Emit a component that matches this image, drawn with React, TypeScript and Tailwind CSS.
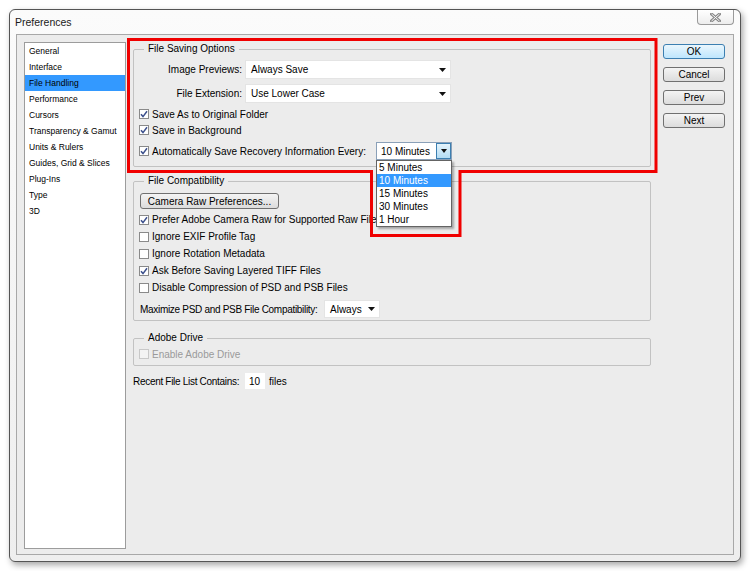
import React from "react";

const categories = [
  "General",
  "Interface",
  "File Handling",
  "Performance",
  "Cursors",
  "Transparency & Gamut",
  "Units & Rulers",
  "Guides, Grid & Slices",
  "Plug-Ins",
  "Type",
  "3D",
];

const intervals = ["5 Minutes", "10 Minutes", "15 Minutes", "30 Minutes", "1 Hour"];

function Check({ checked = false, disabled = false }: { checked?: boolean; disabled?: boolean }) {
  return (
    <span
      className={`w-[10px] h-[10px] shrink-0 border flex items-center justify-center ${
        disabled ? "border-[#c8c8c8] bg-[#f3f3f3]" : "border-[#8a8a8a] bg-white"
      }`}
    >
      {checked && (
        <svg width="8" height="8" viewBox="0 0 8 8">
          <path d="M1 4.2 L3 6.6 L7 1.2" fill="none" stroke="#3b4f8c" strokeWidth="1.5" />
        </svg>
      )}
    </span>
  );
}

function CheckRow({
  label,
  checked,
  disabled,
  h = "h-[16px]",
}: {
  label: string;
  checked?: boolean;
  disabled?: boolean;
  h?: string;
}) {
  return (
    <div className={`flex items-center gap-[3px] ${h}`}>
      <Check checked={checked} disabled={disabled} />
      <span className={`whitespace-nowrap ${disabled ? "text-[#9a9a9a]" : ""}`}>{label}</span>
    </div>
  );
}

function Arrow() {
  return (
    <svg width="7" height="4" viewBox="0 0 7 4" className="shrink-0">
      <path d="M0 0 H7 L3.5 4 Z" fill="#111" />
    </svg>
  );
}

function Select({ value, className }: { value: string; className: string }) {
  return (
    <div className={`shrink-0 bg-white border border-[#e4e4e4] flex items-center pl-[5px] pr-[4px] ${className}`}>
      <span className="flex-1 whitespace-nowrap">{value}</span>
      <Arrow />
    </div>
  );
}

function Button({ label, primary }: { label: string; primary?: boolean }) {
  return (
    <div
      className={`w-[62px] h-[15px] rounded-[3px] border flex items-center justify-center leading-none ${
        primary
          ? "border-[#3c7fb1] bg-gradient-to-b from-[#eaf6fd] to-[#bee6fd]"
          : "border-[#707070] bg-gradient-to-b from-[#f4f4f4] to-[#dcdcdc]"
      }`}
    >
      {label}
    </div>
  );
}

function IntervalDropdown() {
  return (
    <div className="relative z-10 shrink-0 w-[76px] h-[18px] border border-[#8aa0b8] bg-white flex items-stretch">
      <span className="flex-1 pl-[4px] flex items-center whitespace-nowrap">10 Minutes</span>
      <span className="w-[15px] border border-[#3c7fb1] bg-gradient-to-b from-[#e5f4fc] to-[#b3dcf4] flex items-center justify-center">
        <svg width="6" height="4" viewBox="0 0 6 4">
          <path d="M0 0 H6 L3 4 Z" fill="#111" />
        </svg>
      </span>
      <div className="absolute left-[-1px] top-[17px] w-[76px] border border-[#646464] bg-white shadow-[2px_2px_2px_rgba(0,0,0,0.3)]">
        {intervals.map((it) => (
          <div
            key={it}
            className={`h-[13px] leading-[13px] px-[2px] whitespace-nowrap ${
              it === "10 Minutes" ? "bg-[#3399ff] text-white" : ""
            }`}
          >
            {it}
          </div>
        ))}
      </div>
    </div>
  );
}

export default function App() {
  return (
    <div className="relative w-[750px] h-[571px] bg-white font-['Liberation_Sans',Arial,sans-serif] text-[10px] text-black overflow-hidden">
      <div className="pl-[9px] pt-[9px]">
        {/* window */}
        <div className="w-[732px] h-[553px] border border-[#555] rounded-[6px] bg-gradient-to-b from-[#fbfbfb] to-[#eeeeee] shadow-[2px_3px_6px_rgba(0,0,0,0.35)] flex flex-col">
          <div className="h-[24px] flex items-start shrink-0">
            <span className="pl-[5px] pt-[5px] text-[10.5px] text-[#1a1a1a]">Preferences</span>
            <div className="ml-auto mr-[6px] w-[37px] h-[15px] border border-t-0 border-[#9a9a9a] rounded-b-[4px] bg-gradient-to-b from-white to-[#ededed] flex items-center justify-center">
              <svg width="11" height="9" viewBox="0 0 11 9">
                <path d="M1.5 1 L9.5 8 M9.5 1 L1.5 8" stroke="#8a8a8a" strokeWidth="3" strokeLinecap="square" />
                <path d="M1.5 1 L9.5 8 M9.5 1 L1.5 8" stroke="#fafafa" strokeWidth="1" />
              </svg>
            </div>
          </div>

          {/* client area */}
          <div className="mx-[6px] mb-[6px] flex-1 border border-[#a8a8a8] bg-[#ececec] flex items-start pl-[7px] pt-[7px]">
            {/* category list */}
            <div className="w-[102px] h-[507px] border border-[#9c9c9c] bg-white text-[8.5px] shrink-0">
              {categories.map((c) => (
                <div
                  key={c}
                  className={`h-[16px] leading-[16px] pl-[4px] whitespace-nowrap ${
                    c === "File Handling" ? "bg-[#3399ff]" : ""
                  }`}
                >
                  {c}
                </div>
              ))}
            </div>

            {/* main panel */}
            <div className="ml-[7px] mt-[1px] w-[518px] shrink-0 flex flex-col">
              <fieldset className="border border-[#c2c2c2] rounded-[2px] px-[5px] pt-[5px] pb-[6px]">
                <legend className="ml-[5px] px-[4px] leading-[12px]">File Saving Options</legend>
                <div className="flex items-center h-[19px]">
                  <span className="w-[103px] shrink-0 text-right">Image Previews:</span>
                  <Select value="Always Save" className="ml-[3px] w-[206px] h-[19px]" />
                </div>
                <div className="flex items-center h-[19px] mt-[5px]">
                  <span className="w-[103px] shrink-0 text-right">File Extension:</span>
                  <Select value="Use Lower Case" className="ml-[3px] w-[206px] h-[19px]" />
                </div>
                <div className="mt-[3px]">
                  <CheckRow label="Save As to Original Folder" checked />
                  <CheckRow label="Save in Background" checked />
                </div>
                <div className="mt-[4px] flex items-center h-[18px]">
                  <Check checked />
                  <span className="ml-[3px] w-[224px] shrink-0 whitespace-nowrap">
                    Automatically Save Recovery Information Every:
                  </span>
                  <IntervalDropdown />
                </div>
              </fieldset>

              <fieldset className="mt-[8px] border border-[#c2c2c2] rounded-[2px] px-[5px] pt-[6px] pb-[2px]">
                <legend className="ml-[5px] px-[4px] leading-[12px]">File Compatibility</legend>
                <div className="ml-[1px] w-[139px] h-[16px] rounded-[3px] border border-[#707070] bg-gradient-to-b from-[#f4f4f4] to-[#dcdcdc] flex items-center justify-center whitespace-nowrap">
                  Camera Raw Preferences...
                </div>
                <div className="mt-[2px]">
                  <CheckRow label="Prefer Adobe Camera Raw for Supported Raw Files" checked h="h-[17px]" />
                  <CheckRow label="Ignore EXIF Profile Tag" h="h-[17px]" />
                  <CheckRow label="Ignore Rotation Metadata" h="h-[17px]" />
                  <CheckRow label="Ask Before Saving Layered TIFF Files" checked h="h-[17px]" />
                  <CheckRow label="Disable Compression of PSD and PSB Files" h="h-[17px]" />
                </div>
                <div className="mt-[4px] flex items-center h-[18px]">
                  <span className="ml-[1px] w-[184px] shrink-0 whitespace-nowrap tracking-[-0.3px]">
                    Maximize PSD and PSB File Compatibility:
                  </span>
                  <Select value="Always" className="w-[56px] h-[18px]" />
                </div>
              </fieldset>

              <fieldset className="mt-[11px] border border-[#c2c2c2] rounded-[2px] px-[5px] pt-[2px] pb-[3px]">
                <legend className="ml-[5px] px-[4px] leading-[12px]">Adobe Drive</legend>
                <CheckRow label="Enable Adobe Drive" disabled />
              </fieldset>

              <div className="mt-[7px] flex items-center h-[16px]">
                <span className="w-[112px] shrink-0 whitespace-nowrap tracking-[-0.3px]">
                  Recent File List Contains:
                </span>
                <span className="w-[20px] h-[16px] shrink-0 bg-white flex items-center pl-[4px]">10</span>
                <span className="ml-[4px]">files</span>
              </div>
            </div>

            {/* buttons */}
            <div className="ml-[12px] mt-[2px] flex flex-col gap-[8px]">
              <Button label="OK" primary />
              <Button label="Cancel" />
              <Button label="Prev" />
              <Button label="Next" />
            </div>
          </div>
        </div>
      </div>

      {/* red annotation */}
      <svg className="absolute left-0 top-0 pointer-events-none" width="750" height="571" viewBox="0 0 750 571">
        <path
          d="M128.5 39.5 H656 V171.5 H460 V235.5 H371.5 V171.5 H128.5 Z"
          fill="none"
          stroke="#f00000"
          strokeWidth="3"
        />
      </svg>
    </div>
  );
}
